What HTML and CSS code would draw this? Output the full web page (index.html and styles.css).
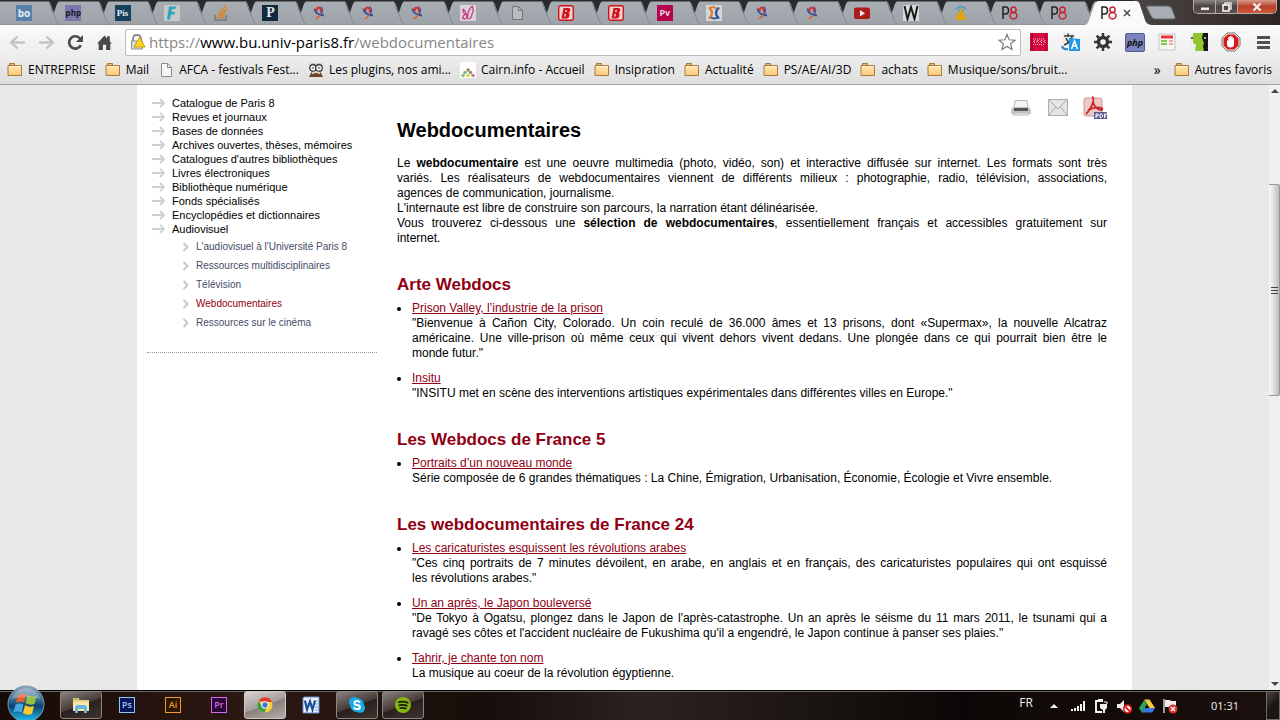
FILE: index.html
```html
<!DOCTYPE html>
<html lang="fr">
<head>
<meta charset="utf-8">
<title>Webdocumentaires</title>
<link rel="stylesheet" href="styles.css">
</head>
<body>
<svg width="0" height="0" class="defs" aria-hidden="true">
  <defs>
    <linearGradient id="fold" x1="0" y1="0" x2="0" y2="1"><stop offset="0" stop-color="#ffe9b0"/><stop offset="1" stop-color="#fbc878"/></linearGradient>
    <linearGradient id="orb" x1="0" y1="0" x2="0" y2="1"><stop offset="0" stop-color="#8ea9bd"/><stop offset=".45" stop-color="#2b5f88"/><stop offset=".55" stop-color="#0c3f6e"/><stop offset="1" stop-color="#20c4f4"/></linearGradient>
    <symbol id="folder" viewBox="0 0 16 16"><path d="M2.500 3.500v-2h5v2h6v2h-11z" fill="#e8b66a" stroke="#a9793f"/><path d="M1 13.500v-10h13.500v10z" fill="url(#fold)" stroke="#a9793f"/><path d="M2 4.500h12" stroke="#fff3d0"/></symbol>
    <symbol id="doc" viewBox="0 0 16 16"><path d="M3.500 1.500h6l4 4v9h-10z" fill="#f6f6f6" stroke="#8c8c8c"/><path d="M9.500 1.500v4h4" fill="none" stroke="#8c8c8c"/></symbol>
    <symbol id="wedge" viewBox="0 0 14 25"><path d="M0 0h14q-3 1-4.500 5l-3 9q-2-4-3-8q-1.500-5-3.500-5z" fill="#282c2d"/><path d="M1 1q2 1 3 5l5 14q1 4 4 4.500" fill="none" stroke="#858b91"/></symbol>
    <symbol id="bird" viewBox="0 0 16 16"><path d="M2.500 3.500Q3 9.500 12 10.500" fill="none" stroke="#2f4a9e" stroke-width="1.800"/><path d="M5 6q-1-3 1.500-3.500Q9.500 3 9 7.500" fill="none" stroke="#df2f22" stroke-width="2.200"/><path d="M9 1.500Q12 6 8.500 10.500" fill="none" stroke="#3d51a0" stroke-width="1.300"/><path d="M8.500 10L4 14" fill="none" stroke="#e0622a" stroke-width="1.600"/></symbol>
    <symbol id="arrow" viewBox="0 0 14 10"><path d="M0 5h12M8 1l4 4-4 4" fill="none" stroke="#d0d0d0" stroke-width="1.800"/></symbol>
    <symbol id="chev" viewBox="0 0 8 10"><path d="M1.500 1l4 4-4 4" fill="none" stroke="#c8c8c8" stroke-width="2"/></symbol>
    <symbol id="p8" viewBox="0 0 16 16"><path d="M1 14V2h2.500q3 0 3 3.500T3.500 9H1" fill="none" stroke="#222" stroke-width="1.500"/><ellipse cx="11.500" cy="4.800" rx="2.600" ry="2.800" fill="none" stroke="#c8202f" stroke-width="1.500"/><ellipse cx="11.500" cy="10.800" rx="3.500" ry="3.200" fill="none" stroke="#c8202f" stroke-width="1.500"/></symbol>
    <symbol id="bred" viewBox="0 0 16 16"><rect x=".7" y=".7" width="14.600" height="14.600" rx="2" fill="#e8d4d6" stroke="#d31318" stroke-width="1.400"/><path d="M5.500 3h5q2.500 0 1.500 3-.5 1.500-1.500 2 1.500.5 1 2.500-.5 3-3 3H3.500zM7.500 5l-.5 2h1.500l.5-2zM6.500 9L6 11.500h1.500L8 9z" fill="#d31318" fill-rule="evenodd"/></symbol>
  </defs>
</svg>

<header class="browser">
  <div class="titlebar">
    <nav class="tabs" aria-label="Onglets">
      <button class="tab" aria-label="bo"><span class="fav fav-bo">bo</span><svg class="wedge"><use href="#wedge"/></svg></button>
      <button class="tab" aria-label="php"><span class="fav fav-php">php</span><svg class="wedge"><use href="#wedge"/></svg></button>
      <button class="tab" aria-label="Pis"><span class="fav fav-pis">Pis</span><svg class="wedge"><use href="#wedge"/></svg></button>
      <button class="tab" aria-label="F"><svg class="fav" viewBox="0 0 16 16"><path d="M0 0h16v16H0z" fill="#c9c8c4"/><path d="M5 1.500h7l-.5 2.500H8l-.5 3H11l-.5 2.500H7l-1 5H3z" fill="#25a6c3"/></svg><svg class="wedge"><use href="#wedge"/></svg></button>
      <button class="tab" aria-label="Questions"><svg class="fav" viewBox="0 0 16 16"><path d="M2 10v5h11v-5" fill="none" stroke="#777" stroke-width="1.500"/><path d="M4 12.500h7M4.200 9.500l7 1M5.500 6l6.500 3M8 2.500l5 5M11.500 0l2.500 5.500" stroke="#e07f22" stroke-width="1.500"/></svg><svg class="wedge"><use href="#wedge"/></svg></button>
      <button class="tab" aria-label="P"><span class="fav fav-p">P</span><svg class="wedge"><use href="#wedge"/></svg></button>
      <button class="tab" aria-label="Onglet 7"><svg class="fav"><use href="#bird"/></svg><svg class="wedge"><use href="#wedge"/></svg></button>
      <button class="tab" aria-label="Onglet 8"><svg class="fav"><use href="#bird"/></svg><svg class="wedge"><use href="#wedge"/></svg></button>
      <button class="tab" aria-label="Onglet 9"><svg class="fav"><use href="#bird"/></svg><svg class="wedge"><use href="#wedge"/></svg></button>
      <button class="tab" aria-label="Onglet 10"><svg class="fav" viewBox="0 0 16 16"><path d="M0 0h16v16H0z" fill="#d7d5d8"/><path d="M3 4q3 2 4 8M12.500 1Q8 4 7.500 12M12.500 1q1.500 5-.5 8 0 3-2 4.500-2 1-3-1.500-2 3-4 1.500-.5-3 2-4Q2.500 7 3 4" fill="none" stroke="#d0368c" stroke-width="1.300"/></svg><svg class="wedge"><use href="#wedge"/></svg></button>
      <button class="tab" aria-label="Document"><svg class="fav" viewBox="0 0 16 16"><path d="M3.500 1.500h6l4 4v9h-10z" fill="#b9bbbd" stroke="#777"/><path d="M9.500 1.500v4h4" fill="none" stroke="#777"/></svg><svg class="wedge"><use href="#wedge"/></svg></button>
      <button class="tab" aria-label="Onglet 12"><svg class="fav"><use href="#bred"/></svg><svg class="wedge"><use href="#wedge"/></svg></button>
      <button class="tab" aria-label="Onglet 13"><svg class="fav"><use href="#bred"/></svg><svg class="wedge"><use href="#wedge"/></svg></button>
      <button class="tab" aria-label="Pv"><span class="fav fav-pv">Pv</span><svg class="wedge"><use href="#wedge"/></svg></button>
      <button class="tab" aria-label="Onglet 15"><svg class="fav" viewBox="0 0 16 16"><path d="M0 0h16v16H0z" fill="#d3d5d7"/><path d="M3 2.500Q6 5 6 8t-3 5.500" fill="none" stroke="#e37a2c" stroke-width="2.200"/><path d="M13 2.500Q10 5 10 8t3 5.500" fill="none" stroke="#284f9a" stroke-width="2.200"/><path d="M4 3q4-2 7 1" fill="none" stroke="#e37a2c" stroke-width="1.800"/><path d="M5 12.500q3 2 7 0" fill="none" stroke="#284f9a" stroke-width="1.800"/></svg><svg class="wedge"><use href="#wedge"/></svg></button>
      <button class="tab" aria-label="Onglet 16"><svg class="fav"><use href="#bird"/></svg><svg class="wedge"><use href="#wedge"/></svg></button>
      <button class="tab" aria-label="Onglet 17"><svg class="fav"><use href="#bird"/></svg><svg class="wedge"><use href="#wedge"/></svg></button>
      <button class="tab" aria-label="Vidéo"><svg class="fav" viewBox="0 0 16 16"><rect y="2.500" width="16" height="11.500" rx="2" fill="#ad1a1c"/><path d="M6 5v6.500l5-3.200z" fill="#eee"/></svg><svg class="wedge"><use href="#wedge"/></svg></button>
      <button class="tab" aria-label="Wikipédia"><svg class="fav" viewBox="0 0 16 16"><path d="M0 0h16v16H0z" fill="#d6d8da"/><path d="M1.500 1l3 13L8 2l3.500 12 3-13" fill="none" stroke="#151515" stroke-width="1.900"/></svg><svg class="wedge"><use href="#wedge"/></svg></button>
      <button class="tab" aria-label="Onglet 20"><svg class="fav" viewBox="0 0 16 16"><path d="M3 4q5-5 10 0M5 6q3-3 6 0" fill="none" stroke="#3a9fc4" stroke-width="1.300"/><path d="M8 4q2 0 2 3l3 5v3H3v-3l3-5q0-3 2-3z" fill="#dca514"/></svg><svg class="wedge"><use href="#wedge"/></svg></button>
      <button class="tab" aria-label="Paris 8"><svg class="fav"><use href="#p8"/></svg><svg class="wedge"><use href="#wedge"/></svg></button>
      <button class="tab" aria-label="Paris 8"><svg class="fav"><use href="#p8"/></svg><svg class="wedge"><use href="#wedge"/></svg></button>
      <button class="tab active" aria-label="Webdocumentaires"><svg class="tabshape" viewBox="0 0 66 25"><path d="M0 25q3-1 4-5l5-14q2-5 5-5h37q3 0 4 4l5 15q1 4 6 5z" fill="#fafafa"/></svg><svg class="fav"><use href="#p8"/></svg><svg class="close" viewBox="0 0 8 8"><path d="M1 1l6 6M7 1L1 7" stroke="#555" stroke-width="1.700"/></svg></button>
    </nav>
    <button class="newtab" aria-label="Nouvel onglet"><svg viewBox="0 0 32 16"><path d="M3 1h20q3 0 4 3l3 8q1 2-2 2H10q-3 0-4-3L2 3q-1-2 1-2z" fill="#a7adb3" stroke="#62676c"/></svg></button>
    <div class="winbtns">
      <button aria-label="Réduire"><svg viewBox="0 0 12 10"><path d="M2 5.500h8v2.500H2z" fill="#eee"/></svg></button>
      <button aria-label="Restaurer"><svg viewBox="0 0 12 10"><path d="M4 3V1h6v6H8" fill="none" stroke="#e6e6e6" stroke-width="1.500"/><path d="M2 3h6v6H2z" fill="none" stroke="#fff" stroke-width="1.500"/></svg></button>
      <button class="winclose" aria-label="Fermer"><svg viewBox="0 0 12 10"><path d="M2.500 1.500l7 7M9.500 1.500l-7 7" stroke="#eee" stroke-width="2.200"/></svg></button>
    </div>
  </div>

  <div class="toolbar">
    <button aria-label="Précédent"><svg viewBox="0 0 16 16"><path d="M15 8H2M8 2.500L2 8l6 5.500" fill="none" stroke="#c4c4c4" stroke-width="2.200"/></svg></button>
    <button aria-label="Suivant"><svg viewBox="0 0 16 16"><path d="M1 8h13M8 2.500L14 8l-6 5.500" fill="none" stroke="#c4c4c4" stroke-width="2.200"/></svg></button>
    <button aria-label="Actualiser"><svg viewBox="0 0 16 16"><path d="M13 10.500A5.800 5.800 0 1 1 12.500 4.500" fill="none" stroke="#4a4a4a" stroke-width="2.500"/><path d="M15 1v6.500H8.500z" fill="#4a4a4a"/></svg></button>
    <button aria-label="Accueil"><svg viewBox="0 0 16 16"><path d="M1 9l7-7.500 2.500 2.700V2H13v5l2 2h-1.500v6h-4v-5h-3v5h-4V9z" fill="#4a4a4a"/></svg></button>
    <div class="omnibox">
      <svg class="lock" viewBox="0 0 16 16"><path d="M3 8V5q0-4 4-4t4 4v3" fill="none" stroke="#8b8b8b" stroke-width="1.800"/><path d="M1.500 7h11v8h-11z" fill="#ddd" stroke="#8b8b8b"/><path d="M9.500 3.500l5.500 9.500H4z" fill="#ffd629" stroke="#c7a000"/></svg>
      <div class="url" role="textbox" aria-label="Adresse"><span>https://</span>www.bu.univ-paris8.fr<span>/webdocumentaires</span></div>
      <button aria-label="Ajouter aux favoris"><svg class="star" viewBox="0 0 18 18"><path d="M9 1.500l2.200 5.300 5.800.4-4.400 3.700 1.400 5.600L9 13.500l-5 3 1.400-5.600L1 7.200l5.800-.4z" fill="#fff" stroke="#7b7b7b" stroke-width="1.200"/></svg></button>
    </div>
    <div class="extensions">
      <button aria-label="Extension"><svg viewBox="0 0 20 20"><path d="M1 1h18v18H1z" fill="#d80b40"/><path d="M3 1v18M17 1v18" stroke="#9c0530" stroke-width="1.500"/><path d="M6 8l-1.500 1.500L6 11M9.500 8L8 9.500 9.500 11M13 8l-1.500 1.500L13 11M16.500 8L15 9.500l1.500 1.500" fill="none" stroke="#f8ccd6"/><path d="M4 7h12M4 12.500h12" stroke="#f4bac8" stroke-dasharray="1 1"/></svg></button>
      <button aria-label="Traduire"><svg viewBox="0 0 20 20"><path d="M2 1l12 1v11H2z" fill="#ecebdc"/><path d="M3 4h10M7 1.500V4M11 5q-2 6-8 8M5 6q2 5 7 6" fill="none" stroke="#333b42" stroke-width="1.500"/><path d="M1 14q1 4 6 3" fill="none" stroke="#2784cd" stroke-width="2"/><path d="M8 6l11 1v12H8z" fill="#2496e8"/><path d="M10.500 17L13.500 9l3 8M11.500 14h4" fill="none" stroke="#fff" stroke-width="1.600"/></svg></button>
      <button aria-label="Réglages"><svg viewBox="0 0 20 20"><circle cx="10" cy="10" r="4.500" fill="none" stroke="#353535" stroke-width="3.500"/><path d="M10 1v4M10 15v4M1 10h4M15 10h4M3.600 3.600l3 3M13.400 13.400l3 3M16.400 3.600l-3 3M6.600 13.400l-3 3" stroke="#353535" stroke-width="2.500"/></svg></button>
      <button class="ext-php" aria-label="php"><span>php</span></button>
      <button aria-label="Notes"><svg viewBox="0 0 20 20"><path d="M2 2h16v16H2z" fill="#f6f6f1" stroke="#c5c5c5"/><path d="M4 5h12" stroke="#ef3340" stroke-width="3"/><path d="M4 9h6M4 12h6" stroke="#81cb51" stroke-width="2"/><path d="M12 9h4M12 12h4" stroke="#f4a7a7" stroke-width="2"/></svg></button>
      <button aria-label="Extension verte"><svg viewBox="0 0 20 20"><path d="M4 1h11v18H6l1-6-3-2z" fill="#93c62e"/><path d="M1 1h3v10l2 2-1 6H1z" fill="#eee"/><path d="M19 1h-5l-1 5 2 5-1 3 1 5h4z" fill="#151515"/><path d="M2 6h2" stroke="#333" stroke-width="1.500"/><path d="M15 6h2" stroke="#eee" stroke-width="1.500"/></svg></button>
      <button aria-label="Bloqueur"><svg viewBox="0 0 20 20"><path d="M6 1h8l5 5v8l-5 5H6l-5-5V6z" fill="#eee" stroke="#777"/><path d="M6.500 2.500h7l4 4v7l-4 4h-7l-4-4v-7z" fill="#d71b1b"/><path d="M6 8l1.200 1V5h1.500v3V4h1.500v4V4.500h1.500V8V6H13v6q0 3.500-3.500 3.500T6 12z" fill="#fff"/></svg></button>
      <button aria-label="Menu"><svg viewBox="0 0 20 20"><path d="M4 5.500h13M4 10.500h13M4 15.500h13" stroke="#505050" stroke-width="2.800"/></svg></button>
    </div>
  </div>

  <nav class="bookmarks" aria-label="Favoris">
    <a href="#"><svg><use href="#folder"/></svg>ENTREPRISE</a>
    <a href="#"><svg><use href="#folder"/></svg>Mail</a>
    <a href="#"><svg><use href="#doc"/></svg>AFCA - festivals Fest...</a>
    <a href="#"><svg viewBox="0 0 16 16"><path d="M1 15l3-6h8l3 6z" fill="#6b4428"/><path d="M2 1h12l1 6H1z" fill="#d8cfc0"/><circle cx="5" cy="6" r="3.300" fill="#eee" stroke="#333" stroke-width="1.200"/><circle cx="11" cy="6" r="3.300" fill="#eee" stroke="#333" stroke-width="1.200"/><path d="M4 6h2M10 6h2M4 2l4 2 4-2" stroke="#444" fill="none"/><path d="M4 11.500q4-3 8 0" stroke="#e4d9c4" stroke-width="2" fill="none"/></svg>Les plugins, nos ami...</a>
    <a href="#"><svg viewBox="0 0 16 16"><path d="M0 0h16v16H0z" fill="#fff"/><circle cx="8" cy="8" r="1.800" fill="#b1834f"/><circle cx="5" cy="10.500" r="1.800" fill="#6bb59c"/><circle cx="10.500" cy="10.500" r="1.800" fill="#9c8c7b"/><circle cx="3" cy="13.500" r="1.800" fill="#8abf85"/><circle cx="8" cy="13.500" r="1.800" fill="#d8d72c"/><circle cx="13" cy="13.500" r="1.800" fill="#b3848a"/></svg>Cairn.info - Accueil</a>
    <a href="#"><svg><use href="#folder"/></svg>Insipration</a>
    <a href="#"><svg><use href="#folder"/></svg>Actualité</a>
    <a href="#"><svg><use href="#folder"/></svg>PS/AE/AI/3D</a>
    <a href="#"><svg><use href="#folder"/></svg>achats</a>
    <a href="#"><svg><use href="#folder"/></svg>Musique/sons/bruit...</a>
    <button class="more" aria-label="Autres">»</button>
    <a class="others" href="#"><svg><use href="#folder"/></svg>Autres favoris</a>
  </nav>
</header>

<div class="viewport">
  <div class="scrollarea">
    <div class="sheet">
      <aside class="sidebar">
        <ul class="menu">
          <li><svg><use href="#arrow"/></svg><a href="#">Catalogue de Paris 8</a></li>
          <li><svg><use href="#arrow"/></svg><a href="#">Revues et journaux</a></li>
          <li><svg><use href="#arrow"/></svg><a href="#">Bases de données</a></li>
          <li><svg><use href="#arrow"/></svg><a href="#">Archives ouvertes, thèses, mémoires</a></li>
          <li><svg><use href="#arrow"/></svg><a href="#">Catalogues d'autres bibliothèques</a></li>
          <li><svg><use href="#arrow"/></svg><a href="#">Livres électroniques</a></li>
          <li><svg><use href="#arrow"/></svg><a href="#">Bibliothèque numérique</a></li>
          <li><svg><use href="#arrow"/></svg><a href="#">Fonds spécialisés</a></li>
          <li><svg><use href="#arrow"/></svg><a href="#">Encyclopédies et dictionnaires</a></li>
          <li><svg><use href="#arrow"/></svg><a href="#">Audiovisuel</a></li>
        </ul>
        <ul class="submenu">
          <li><svg><use href="#chev"/></svg><a href="#">L'audiovisuel à l'Université Paris 8</a></li>
          <li><svg><use href="#chev"/></svg><a href="#">Ressources multidisciplinaires</a></li>
          <li><svg><use href="#chev"/></svg><a href="#">Télévision</a></li>
          <li><svg><use href="#chev"/></svg><a class="current" href="#">Webdocumentaires</a></li>
          <li><svg><use href="#chev"/></svg><a href="#">Ressources sur le cinéma</a></li>
        </ul>
      </aside>
      <main class="content">
        <div class="actions">
          <a href="#" aria-label="Imprimer"><svg viewBox="0 0 24 24"><path d="M6 4.500h12l1 7H5z" fill="#f4f4f4" stroke="#b5b5b5"/><path d="M4 11h16l2 3v4H2v-4z" fill="#c4c4c4"/><path d="M5 12h14v3H5z" fill="#555"/><path d="M5 17h14l1 2H4z" fill="#efefef" stroke="#bbb"/></svg></a>
          <a href="#" aria-label="Envoyer"><svg viewBox="0 0 24 24"><path d="M2.500 3.500h19v16h-19z" fill="#e5e5e5" stroke="#adadad"/><path d="M3 4l9 9 9-9M3 19l6.500-8M21 19l-6.500-8" fill="none" stroke="#a9a9a9"/></svg></a>
          <a href="#" aria-label="PDF"><svg viewBox="0 0 24 24"><rect x="1" y="2" width="18" height="18" rx="2" fill="#eac9c9" stroke="#c99"/><path d="M9 1q2 0 1 5-2 7-7 12M10 6q2 7 8 8 2 0 1-2-6-2-14 2" fill="none" stroke="#d1252b" stroke-width="1.800"/><path d="M11 16h13v7H11z" fill="#5f5f91"/><path d="M13 22v-4h2v2h-2M17 18h1.500l1 1v1.500l-1 1H17zM21.500 22v-4H24M21.500 20H23" fill="none" stroke="#fff"/></svg></a>
        </div>
        <h1>Webdocumentaires</h1>
        <p><span class="line">Le <b>webdocumentaire</b> est une oeuvre multimedia (photo, vidéo, son) et interactive diffusée sur internet. Les formats sont très</span> <span class="line">variés. Les réalisateurs de webdocumentaires viennent de différents milieux : photographie, radio, télévision, associations,</span> agences de communication, journalisme.<br>L'internaute est libre de construire son parcours, la narration étant délinéarisée. <span class="line">Vous trouverez ci-dessous une <b>sélection de webdocumentaires</b>, essentiellement français et accessibles gratuitement sur</span> internet.</p>
        <h2>Arte Webdocs</h2>
        <ul>
          <li><a href="#">Prison Valley, l’industrie de la prison</a> <span class="line">"Bienvenue à Cañon City, Colorado. Un coin reculé de 36.000 âmes et 13 prisons, dont «Supermax», la nouvelle Alcatraz</span> <span class="line">américaine. Une ville-prison où même ceux qui vivent dehors vivent dedans. Une plongée dans ce qui pourrait bien être le</span> monde futur."</li>
          <li><a href="#">Insitu</a><br>"INSITU met en scène des interventions artistiques expérimentales dans différentes villes en Europe."</li>
        </ul>
        <h2>Les Webdocs de France 5</h2>
        <ul>
          <li><a href="#">Portraits d’un nouveau monde</a><br>Série composée de 6 grandes thématiques : La Chine, Émigration, Urbanisation, Économie, Écologie et Vivre ensemble.</li>
        </ul>
        <h2>Les webdocumentaires de France 24</h2>
        <ul>
          <li><a href="#">Les caricaturistes esquissent les révolutions arabes</a> <span class="line">"Ces cinq portraits de 7 minutes dévoilent, en arabe, en anglais et en français, des caricaturistes populaires qui ont esquissé</span> les révolutions arabes."</li>
          <li><a href="#">Un an après, le Japon bouleversé</a> <span class="line">"De Tokyo à Ogatsu, plongez dans le Japon de l'après-catastrophe. Un an après le séisme du 11 mars 2011, le tsunami qui a</span> ravagé ses côtes et l'accident nucléaire de Fukushima qu'il a engendré, le Japon continue à panser ses plaies."</li>
          <li><a href="#">Tahrir, je chante ton nom</a><br>La musique au coeur de la révolution égyptienne.</li>
        </ul>
      </main>
    </div>
    <div class="tooltip">Capture Plein écran</div>
  </div>
  <div class="scrollbar">
    <svg viewBox="0 0 12 12"><path d="M2 8l4-4 4 4z" fill="#444"/></svg>
    <div class="track"><div class="thumb"><i></i><i></i><i></i></div></div>
    <svg viewBox="0 0 12 12"><path d="M2 4l4 4 4-4z" fill="#444"/></svg>
  </div>
</div>

<footer class="taskbar">
  <button class="start" aria-label="Démarrer"><svg viewBox="0 0 38 38"><circle cx="19" cy="19" r="18" fill="url(#orb)" stroke="#7d97a8"/><path d="M11 10.500q4-3 8-1l-2 8q-4-2-8 0z" fill="#e8632c"/><path d="M20.500 10q4 3 9 1l-2 8q-5 2-9-1z" fill="#94c23d"/><path d="M8.500 19.500q4-2 8 0l-2 8q-4-2-8 0z" fill="#4ba8de"/><path d="M18 20q4 3 9 1l-2 8q-5 2-9-1z" fill="#fbc62e"/><path d="M4 14q6-11 15-11t15 11q-15-4-30 0z" fill="#fff" opacity=".25"/></svg></button>
  <div class="apps">
    <button class="open" aria-label="Explorateur"><svg viewBox="0 0 18 18"><path d="M1 4V2h6v2h10v11H1z" fill="#e9d28a"/><path d="M1 6h16v9H1z" fill="#f6e7ab"/><path d="M3 17v-5q0-3 3-3h6q3 0 3 3v5h-3v-4H6v4z" fill="#66b5dc"/><path d="M2 3h4" stroke="#5eb83f"/></svg></button>
    <button aria-label="Photoshop"><span class="adobe ps">Ps</span></button>
    <button aria-label="Illustrator"><span class="adobe ai">Ai</span></button>
    <button aria-label="Premiere"><span class="adobe pr">Pr</span></button>
    <button class="open front" aria-label="Chrome"><svg viewBox="0 0 18 18"><circle cx="9" cy="9" r="7.500" fill="#f9cf35"/><path d="M2.500 5.200A7.500 7.500 0 0 1 16 6H9z" fill="#dc3b2d"/><path d="M2.500 5.200A7.500 7.500 0 0 0 8.500 16.500L11 11 6 10z" fill="#3a9f47"/><circle cx="9" cy="9" r="3.700" fill="#fff"/><circle cx="9" cy="9" r="2.700" fill="#3c78cf"/></svg></button>
    <button aria-label="Word"><svg viewBox="0 0 18 18"><path d="M2 1h15v16H1V2z" fill="#e8f0fa" stroke="#5e8cc9"/><path d="M13 5h3M13 8h3M13 11h3M13 14h3" stroke="#7aa2d6"/><path d="M3 4.500l2 9 3-8 2.500 8 2.500-9" fill="none" stroke="#1c4d9c" stroke-width="2.200"/></svg></button>
    <button class="open" aria-label="Skype"><svg viewBox="0 0 18 18"><circle cx="6" cy="6" r="5" fill="#19a9e6"/><circle cx="12" cy="12" r="5" fill="#19a9e6"/><circle cx="9" cy="9" r="7" fill="#19a9e6"/><path d="M12 6.500Q11 5 9 5 6.500 5 6.500 7T9 9q3 .3 3 2.200T9 13q-2.500 0-3.200-1.700" fill="none" stroke="#fff" stroke-width="1.900"/></svg></button>
    <button class="open" aria-label="Spotify"><svg viewBox="0 0 18 18"><circle cx="9" cy="9" r="8" fill="#85b70c"/><path d="M4 6.500q5-2 10.500.5M4.500 9.500q4.500-1.500 9 .5M5.500 12.300q3.500-1.200 7 .5" fill="none" stroke="#1b1b10" stroke-width="1.700"/></svg></button>
  </div>
  <div class="tray">
    <span class="lang">FR</span>
    <svg class="up" viewBox="0 0 8 8"><path d="M0 6l4-4 4 4z" fill="#eee"/></svg>
    <svg viewBox="0 0 16 16"><path d="M2 13v-2M5 13v-3M8 13V8M11 13V6M14 13V3" stroke="#f2f2f2" stroke-width="2"/></svg>
    <svg viewBox="0 0 16 16"><path d="M6 3H3v11h6" fill="none" stroke="#fff" stroke-width="1.800"/><path d="M5 1h5v3H5zM7 6h7v4l-2 2v3h-2v-3l-3-2z" fill="#eee"/><path d="M11 4h3v2" stroke="#fff" fill="none"/></svg>
    <svg viewBox="0 0 16 16"><path d="M1 6h3l4-4v12l-4-4H1z" fill="#eee"/><circle cx="11.500" cy="11" r="3.800" fill="#fff" stroke="#e02020" stroke-width="1.800"/><path d="M9 8.500l5 5" stroke="#e02020" stroke-width="1.800"/></svg>
    <svg viewBox="0 0 16 16"><path d="M5.500 1.500L0 10l2.800 4.500L8 6z" fill="#2da45b"/><path d="M5.500 1.500h5L16 10h-5.500z" fill="#fdcc3e"/><path d="M5 10h11l-2.800 4.500H2.500z" fill="#3978df"/></svg>
    <svg viewBox="0 0 16 16"><path d="M2 1v14" stroke="#ccc" stroke-width="1.500"/><path d="M3 2h5l1 1h5v6H3z" fill="#eee"/><circle cx="11" cy="11" r="4.500" fill="#d9302d"/><path d="M9 9l4 4M13 9l-4 4" stroke="#fff" stroke-width="1.500"/></svg>
    <time class="clock">01:31</time>
    <button class="desktop" aria-label="Afficher le bureau"></button>
  </div>
</footer>
</body>
</html>
```
FILE: styles.css
```css
* { box-sizing: border-box; }
body {
  margin: 0;
  height: 100vh;
  display: flex;
  flex-direction: column;
  overflow: hidden;
  background: #e8e8e8;
  color: #000;
  font: 12px/15px "Liberation Sans", Arial, sans-serif;
}
button { border: 0; padding: 0; background: none; font: inherit; color: inherit; }
a { color: inherit; text-decoration: none; }
ul { list-style: none; margin: 0; padding: 0; }
svg { display: block; flex: none; }
.defs { position: absolute; }

/* Browser frame */
.browser { font-family: "Open Sans", "Noto Sans", sans-serif; border-bottom: 1px solid #a2a2a2; flex: none; }
.titlebar { display: flex; height: 25px; background: linear-gradient(90deg, #333, #282c2d 60%, #51504e 85%, #302422); }
.tabs {
  flex: 1;
  display: flex;
  height: 25px;
  background: linear-gradient(#282c2d 1px, #a9aeb4 2px, #9da3a9 24px, #80868b 25px);
}
.tab { flex: 1 1 0; min-width: 0; position: relative; display: flex; align-items: center; padding-left: 16px; }
.fav { width: 16px; height: 16px; flex: none; line-height: 16px; font-size: 9px; text-align: center; overflow: hidden; }
.fav-bo { background: #5580a8; color: #e4edf5; font-weight: 700; font-size: 10px; }
.fav-php { background: #7a79ae; color: #151522; font-size: 8px; font-weight: 700; }
.fav-pis { background: #16405c; color: #e6eef2; font: 700 9px/16px "Liberation Serif", serif; }
.fav-p { background: #10293d; color: #e6e6e6; font: 700 14px/16px "Liberation Serif", serif; }
.fav-pv { background: #b2054b; color: #f0d4de; font-weight: 700; }
.wedge { position: absolute; right: -12px; top: 0; width: 14px; height: 25px; }
.active { z-index: 1; }
.tabshape { position: absolute; left: 0; top: 0; width: 66px; height: 25px; }
.active .fav { position: relative; }
.close { position: relative; width: 8px; height: 8px; margin-left: 6px; }
.newtab { margin: 5px 16px 4px 11px; }
.newtab svg { width: 32px; height: 16px; }
.winbtns { display: flex; height: 14px; margin-right: 3px; border: 1px solid #b5a9a6; border-top: 0; border-radius: 0 0 5px 5px; overflow: hidden; }
.winbtns button { width: 22px; display: grid; place-items: center; border-right: 1px solid #aaa; background: linear-gradient(#8c8683, #4b4340 50%, #5d5451); }
.winbtns .winclose { width: 38px; border: 0; background: linear-gradient(#d79b8c, #b8402a 50%, #d0593b); }
.winbtns svg { width: 12px; height: 10px; }

.toolbar { display: flex; align-items: center; height: 34px; padding: 0 7px 0 9px; background: linear-gradient(#fafafa, #ececec); }
.toolbar > button { width: 29px; height: 28px; }
.toolbar > button svg { width: 17px; height: 17px; }
.omnibox { flex: 1; display: flex; align-items: center; height: 27px; margin-right: 8px; padding: 0 4px; border: 1px solid #bdbdbd; border-radius: 2px; background: #fff; }
.lock { width: 16px; height: 16px; }
.url { flex: 1; padding-left: 3px; font-size: 15px; line-height: 20px; white-space: nowrap; }
.url span { color: #878787; }
.star { width: 18px; height: 18px; }
.extensions { display: flex; gap: 12px; }
.extensions button, .extensions svg { width: 20px; height: 20px; }
.ext-php span { display: block; border: 1px solid #555b98; border-radius: 2px; background: #7b83bd; color: #111; font-size: 9px; font-style: italic; font-weight: 700; line-height: 17px; }

.bookmarks { display: flex; align-items: center; height: 25px; padding: 0 8px 4px 7px; gap: 9px; background: linear-gradient(#ececec, #dedede); font-size: 12px; line-height: 16px; white-space: nowrap; }
.bookmarks a { display: flex; align-items: center; gap: 5px; }
.bookmarks svg { width: 16px; height: 16px; }
.more { margin-left: auto; font-size: 14px; }
.bookmarks .others { padding-left: 4px; }

/* Library page */
.viewport { flex: 1; min-height: 0; display: flex; }
.scrollarea { flex: 1; overflow: hidden; position: relative; }
.sheet { display: flex; gap: 20px; max-width: 995px; min-height: 100%; margin: 0 auto; padding: 0 25px 0 10px; background: #fff; }
.sidebar { width: 230px; flex: none; align-self: flex-start; padding: 11px 0 20px 5px; border-bottom: 1px dotted #999; }
.menu { font-size: 11px; line-height: 14px; }
.sidebar li { display: flex; align-items: center; }
.menu li { gap: 6px; }
.menu svg { width: 14px; height: 10px; }
.submenu { padding: 1px 0 0 30px; font-size: 10px; line-height: 19px; color: #444b66; }
.submenu li { gap: 6px; }
.submenu svg { width: 8px; height: 10px; }
.submenu .current { color: #900014; }
.content { flex: 1; padding-top: 11px; }
.actions { display: flex; justify-content: flex-end; gap: 13px; }
.actions svg { width: 24px; height: 24px; }
h1 { margin: 0 0 16px; font-size: 20px; line-height: 20px; }
p { margin: 0 0 10px; text-align: justify; }
.line { display: block; text-align-last: justify; }
h2 { margin: 0; padding: 19px 0 6px; font-size: 17px; line-height: 20px; color: #900014; }
.content li { position: relative; margin: 0 0 10px 15px; text-align: justify; }
.content li::before { content: ""; position: absolute; left: -15px; top: 6px; width: 4px; height: 4px; border-radius: 50%; background: #000; }
.content li a { color: #900014; text-decoration: underline; }
.tooltip { position: absolute; left: 582px; top: 240px; width: 158px; padding: 2px 0; text-align: center; font-family: "Open Sans", sans-serif; font-size: 11px; line-height: 16px; color: rgba(0, 0, 0, .13); border-bottom: 1px solid rgba(0, 0, 0, .03); }
.scrollbar { width: 11px; display: flex; flex-direction: column; background: #f0f0f0; }
.scrollbar svg { width: 12px; height: 12px; }
.track { flex: 1; padding-top: 87px; }
.thumb { height: 212px; display: flex; flex-direction: column; align-items: center; justify-content: center; gap: 2px; border: 1px solid #979797; border-left: 0; border-radius: 0 2px 2px 0; background: linear-gradient(90deg, #fafafa, #e2e2e2 45%, #bcbcc2); }
.thumb i { width: 7px; height: 1px; background: #444; }

/* Taskbar */
.taskbar { flex: none; display: flex; height: 30px; border-top: 1px solid #000; box-shadow: inset 0 1px #6d6663; background: linear-gradient(90deg, #170b08, #2e1913 20%, #170d0a 38%, #2b2320 50%, #0c0706 75%, #1c100d); color: #f0f0f0; font-family: "Open Sans", sans-serif; }
.start { margin: -6px 14px 0 7px; height: 38px; position: relative; }
.start svg { width: 38px; height: 38px; }
.apps { display: flex; gap: 4px; padding-left: 1px; }
.apps button { width: 42px; height: 28px; display: grid; place-items: center; border-radius: 3px; }
.apps svg { width: 18px; height: 18px; }
.apps .open { border: 1px solid #8c8582; background: linear-gradient(160deg, #8a8380, #453a37 50%, #2a201e 52%, #3d3330); }
.apps .front { background: linear-gradient(160deg, #d8d4d3, #a59c9a 50%, #8a7f7d 52%, #b5adab); border-color: #cfcac8; }
.adobe { width: 16px; height: 16px; border: 1px solid; font-size: 9px; font-weight: 600; line-height: 14px; }
.ps { color: #93c5f4; background: #0b1654; }
.ai { color: #f39b2c; background: #2d1703; }
.pr { color: #d668ea; background: #2b0838; }
.tray { margin-left: auto; display: flex; align-items: center; gap: 7px; }
.tray svg { width: 16px; height: 16px; }
.tray .up { width: 8px; height: 8px; margin: 0 5px 0 10px; }
.lang { padding-bottom: 6px; font-size: 12px; }
.clock { margin: 0 20px 0 26px; font-size: 11px; }
.desktop { width: 14px; align-self: stretch; border: 1px solid #6f6a68; background: linear-gradient(135deg, #4d4745, #1b1513 50%); }
```
